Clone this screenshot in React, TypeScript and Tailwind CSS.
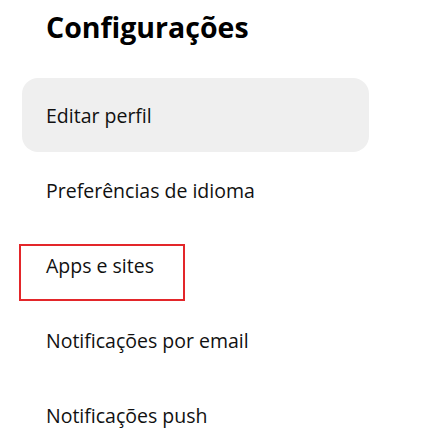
export default function App() {
  const items = [
    "Editar perfil",
    "Preferências de idioma",
    "Apps e sites",
    "Notificações por email",
    "Notificações push",
  ];

  return (
    <main
      className="min-h-screen bg-white px-[22px] text-[#111111]"
      style={{ fontFamily: '"Open Sans", "Noto Sans", sans-serif' }}
    >
      <h1 className="pl-6 pt-[8px] text-[28.5px] font-bold leading-[38px] text-black">
        Configurações
      </h1>
      <nav className="mt-[32px] flex w-[347px] flex-col">
        {items.map((item, i) => (
          <div
            key={item}
            className={
              i === 0
                ? "relative flex h-[74px] items-center rounded-2xl bg-[#efefef] px-6"
                : "relative flex h-[75px] items-center px-6"
            }
          >
            <span className="pt-[2px] text-[19.5px] leading-none">{item}</span>
            {i === 2 && (
              <span className="absolute left-[-3px] top-[17px] h-[57px] w-[166px] border-2 border-[#e3262a]" />
            )}
          </div>
        ))}
      </nav>
    </main>
  );
}
